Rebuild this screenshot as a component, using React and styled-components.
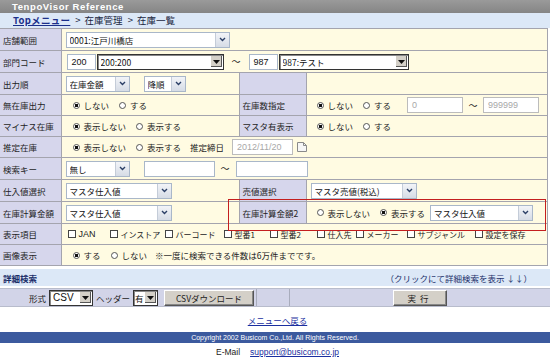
import React from 'react';
import styled, { createGlobalStyle } from 'styled-components';

const GlobalStyle = createGlobalStyle`
  body {
    margin: 0;
    background: #fff;
    font-family: "Noto Sans CJK JP", "Liberation Sans", sans-serif;
    font-size: 8.5px;
    color: #222;
  }
`;

const jp = `"Noto Sans CJK JP", "Liberation Sans", sans-serif`;

const Page = styled.div`
  position: relative;
  width: 550px;
  height: 362px;
  overflow: hidden;
`;

const TitleBar = styled.div`
  height: 13px;
  background: linear-gradient(#9a9a9a, #858585);
  color: #fff;
  font-family: "Liberation Sans", sans-serif;
  font-weight: bold;
  font-size: 9.5px;
  letter-spacing: 0.6px;
  line-height: 13px;
  padding-left: 12px;
`;

const Crumbs = styled.div`
  height: 15px;
  background: #dce8f7;
  line-height: 15px;
  padding-left: 13px;
  font-family: ${jp};
  font-size: 9.5px;
  color: #1a2640;

  a {
    color: #1b2f8a;
    font-weight: bold;
    text-decoration: underline;
    letter-spacing: 0.3px;
  }
`;

const Sep = styled.span`
  margin: 0 4px 0 5px;
`;

const Table = styled.table`
  width: 548px;
  border-collapse: collapse;
  table-layout: fixed;
  font-family: ${jp};
  font-size: 8.5px;
`;

const Row = styled.tr`
  height: ${p => p.$h || 21}px;
`;

const Label = styled.td`
  background: #d6d6ec;
  border: 1px solid #a4a4ae;
  border-left: none;
  padding: 0 0 0 3px;
  white-space: nowrap;
  color: #1e1e1e;
`;

const Value = styled.td`
  background: #fffbe2;
  border: 1px solid #a4a4ae;
  padding: 0 0 0 4px;
  white-space: nowrap;
`;

const Line = styled.div`
  display: flex;
  align-items: center;
  gap: ${p => p.$gap ?? 4}px;
  padding-left: ${p => p.$pl || 0}px;
`;

const Select = styled.div`
  display: flex;
  align-items: center;
  box-sizing: border-box;
  width: ${p => p.$w}px;
  height: 16px;
  background: #fff;
  border: 1px solid ${p => (p.$classic ? '#333' : '#a9b7c9')};
  box-shadow: ${p => (p.$classic ? 'inset 1px 1px 0 #888' : 'none')};
  padding-left: ${p => p.$pl ?? 3}px;
  margin-left: ${p => p.$ml || 0}px;
  font-family: ${p => (p.$latin ? '"Liberation Sans", sans-serif' : jp)};
  font-size: ${p => (p.$latin ? 10 : 8.5)}px;
  color: #111;
  span {
    flex: 1;
    overflow: hidden;
  }
`;

const Arrow = styled.i`
  flex: none;
  width: ${p => (p.$classic ? 11 : 13)}px;
  height: ${p => (p.$classic ? 11 : 14)}px;
  margin-right: ${p => (p.$classic ? 1 : 0)}px;
  display: flex;
  align-items: center;
  justify-content: center;
  background: ${p => (p.$classic ? '#d4d0c8' : 'linear-gradient(#f2f4f8, #d6dce6)')};
  border-left: 1px solid ${p => (p.$classic ? '#fff' : '#c4ccd8')};
  box-shadow: ${p => (p.$classic ? 'inset -1px -1px 0 #555' : 'none')};
`;

const Input = styled.div`
  box-sizing: border-box;
  width: ${p => p.$w}px;
  height: 16px;
  background: #fff;
  border: 1px solid ${p => (p.$disabled ? '#bcbcbc' : '#a9b7c9')};
  color: ${p => (p.$disabled ? '#a8a8a8' : '#111')};
  padding-left: 4px;
  line-height: 14px;
  margin-left: ${p => p.$ml || 0}px;
  font-family: "Liberation Sans", sans-serif;
  font-size: 9px;
`;

const Tilde = styled.span`
  display: inline-block;
  width: ${p => p.$w || 14}px;
  text-align: center;
  font-size: 9px;
`;

const Radio = styled.span`
  display: inline-flex;
  align-items: center;
  margin-left: ${p => p.$ml || 0}px;
  &::before {
    content: '';
    box-sizing: border-box;
    width: 7px;
    height: 7px;
    border-radius: 50%;
    border: 1px solid #555;
    margin-right: 4px;
    background: ${p => (p.$on ? 'radial-gradient(circle, #111 0 1.6px, #fff 1.8px)' : '#fff')};
  }
`;

const Check = styled.span`
  display: inline-flex;
  align-items: center;
  flex: none;
  width: ${p => (p.$w ? `${p.$w}px` : 'auto')};
  font-family: ${p => (p.$latin ? '"Liberation Sans", sans-serif' : jp)};
  font-size: ${p => (p.$latin ? 9 : 8)}px;
  &::before {
    content: '';
    box-sizing: border-box;
    width: 8px;
    height: 8px;
    border: 1px solid #444;
    background: #fff;
    margin-right: 3px;
  }
`;

const Text = styled.span`
  margin-left: ${p => p.$ml || 0}px;
`;

const Highlight = styled.div`
  position: absolute;
  left: 228px;
  top: 199px;
  width: 318px;
  height: 32px;
  box-sizing: border-box;
  border: 1.5px solid #c41e1e;
  pointer-events: none;
`;

const DetailBar = styled.div`
  margin-top: 3px;
  height: 17px;
  background: #dce8f7;
  display: flex;
  align-items: center;
  justify-content: space-between;
  padding: 0 18px 0 3px;
  font-family: ${jp};
  font-size: 8.5px;
  color: #1b2f6a;
  b {
    font-weight: bold;
  }
`;

const Toolbar = styled.div`
  margin-top: 2px;
  height: 17px;
  background: #d2d4e8;
  border-top: 1px solid #b8bccc;
  border-bottom: 1px solid #b8bccc;
  display: grid;
  grid-template-columns: 257px 33px 1fr;
  font-family: ${jp};
  font-size: 8.5px;
`;

const ToolCell = styled.div`
  display: flex;
  align-items: center;
  justify-content: ${p => (p.$center ? 'center' : 'flex-end')};
  gap: 3px;
  padding-right: ${p => (p.$center ? 0 : 2)}px;
  border-right: ${p => (p.$sep ? '1px solid #a8acbc' : 'none')};
`;

const Button = styled.div`
  box-sizing: border-box;
  width: ${p => p.$w}px;
  height: 16px;
  background: #d4d0c8;
  border: 1px solid;
  border-color: #fff #555 #555 #fff;
  box-shadow: inset -1px -1px 0 #888;
  display: flex;
  align-items: center;
  justify-content: center;
  margin-left: ${p => p.$ml || 0}px;
  letter-spacing: ${p => p.$ls || 0}px;
  font-family: ${jp};
  font-size: 8.5px;
  color: #222;
`;

const BackLink = styled.div`
  text-align: center;
  margin-top: 5px;
  height: 16px;
  line-height: 16px;
  padding-left: 5px;
  a {
    color: #1b2fa0;
    text-decoration: underline;
  }
`;

const Copyright = styled.div`
  margin-top: 4px;
  height: 11px;
  background: #3c5a9e;
  color: #fff;
  text-align: center;
  font-family: "Liberation Sans", sans-serif;
  font-size: 7px;
  line-height: 11px;
`;

const Mail = styled.div`
  margin-top: 3px;
  height: 12px;
  line-height: 12px;
  text-align: center;
  font-family: "Liberation Sans", sans-serif;
  font-size: 8.5px;
  padding-left: 5px;
  a {
    margin-left: 10px;
    color: #1b2fa0;
    text-decoration: underline;
  }
`;

const Sel = ({ w, children, classic, ml, latin, pl }) => (
  <Select $w={w} $classic={classic} $ml={ml} $latin={latin} $pl={pl}>
    <span>{children}</span>
    <Arrow $classic={classic}>
      {classic ? (
        <svg width="7" height="4" viewBox="0 0 7 4"><path d="M0 0h7L3.5 4z" fill="#111" /></svg>
      ) : (
        <svg width="7" height="5" viewBox="0 0 7 5"><path d="M1 1l2.5 2.5L6 1" stroke="#2b3f66" strokeWidth="1.4" fill="none" /></svg>
      )}
    </Arrow>
  </Select>
);

const Calendar = () => (
  <svg width="10" height="10" viewBox="0 0 10 10" style={{ marginLeft: 4 }}>
    <path d="M0.5 0.5h6l3 3v6h-9z" fill="#f6f6f6" stroke="#8a8a8a" />
    <path d="M6.5 0.5v3h3" fill="none" stroke="#8a8a8a" />
  </svg>
);

const columns = [
  ['JAN', 42, true],
  ['インストア', 55],
  ['バーコード', 59],
  ['型番1', 46],
  ['型番2', 47],
  ['仕入先', 39],
  ['メーカー', 51],
  ['サブジャンル', 68],
  ['設定を保存', 0],
];

export default function App() {
  return (
    <Page>
      <GlobalStyle />
      <TitleBar>TenpoVisor Reference</TitleBar>
      <Crumbs>
        <a>Topメニュー</a>
        <Sep>&gt;</Sep>在庫管理
        <Sep>&gt;</Sep>在庫一覧
      </Crumbs>
      <Table>
        <colgroup>
          <col style={{ width: 61 }} />
          <col style={{ width: 178 }} />
          <col style={{ width: 67 }} />
          <col />
        </colgroup>
        <tbody>
          <Row $h={22}>
            <Label>店舗範囲</Label>
            <Value colSpan={3}><Sel w={164}>0001:江戸川橋店</Sel></Value>
          </Row>
          <Row $h={22}>
            <Label>部門コード</Label>
            <Value colSpan={3}>
              <Line $gap={0}>
                <Input $w={29} $ml={1}>200</Input>
                <Sel w={127} classic ml={1}>200:200</Sel>
                <Tilde $w={25}>～</Tilde>
                <Input $w={29}>987</Input>
                <Sel w={130} classic ml={1}>987:テスト</Sel>
              </Line>
            </Value>
          </Row>
          <Row $h={22}>
            <Label>出力順</Label>
            <Value>
              <Line $gap={14}>
                <Sel w={64}>在庫金額</Sel>
                <Sel w={42}>降順</Sel>
              </Line>
            </Value>
            <Label />
            <Value />
          </Row>
          <Row>
            <Label>無在庫出力</Label>
            <Value>
              <Radio $on $ml={7}>しない</Radio>
              <Radio $ml={10}>する</Radio>
            </Value>
            <Label>在庫数指定</Label>
            <Value>
              <Line $gap={0}>
                <Radio $on $ml={6}>しない</Radio>
                <Radio $ml={10}>する</Radio>
                <Input $w={56} $ml={16} $disabled>0</Input>
                <Tilde $w={20}>～</Tilde>
                <Input $w={56} $disabled>999999</Input>
              </Line>
            </Value>
          </Row>
          <Row>
            <Label>マイナス在庫</Label>
            <Value>
              <Radio $on $ml={7}>表示しない</Radio>
              <Radio $ml={10}>表示する</Radio>
            </Value>
            <Label>マスタ有表示</Label>
            <Value>
              <Radio $on $ml={6}>しない</Radio>
              <Radio $ml={10}>する</Radio>
            </Value>
          </Row>
          <Row>
            <Label>推定在庫</Label>
            <Value colSpan={3}>
              <Line $gap={0}>
                <Radio $on $ml={7}>表示しない</Radio>
                <Radio $ml={10}>表示する</Radio>
                <Text $ml={9}>推定締日</Text>
                <Input $w={61} $ml={8} $disabled>2012/11/20</Input>
                <Calendar />
              </Line>
            </Value>
          </Row>
          <Row $h={22}>
            <Label>検索キー</Label>
            <Value colSpan={3}>
              <Line $gap={0}>
                <Sel w={64}>無し</Sel>
                <Input $w={71} $ml={14} />
                <Tilde $w={21}>～</Tilde>
                <Input $w={72} />
              </Line>
            </Value>
          </Row>
          <Row $h={22}>
            <Label>仕入値選択</Label>
            <Value><Sel w={106}>マスタ仕入値</Sel></Value>
            <Label>売値選択</Label>
            <Value><Sel w={106}>マスタ売値(税込)</Sel></Value>
          </Row>
          <Row $h={22}>
            <Label>在庫計算金額</Label>
            <Value><Sel w={106}>マスタ仕入値</Sel></Value>
            <Label>在庫計算金額2</Label>
            <Value>
              <Line $gap={0}>
                <Radio $ml={6}>表示しない</Radio>
                <Radio $on $ml={10}>表示する</Radio>
                <Sel w={103} ml={5}>マスタ仕入値</Sel>
              </Line>
            </Value>
          </Row>
          <Row>
            <Label>表示項目</Label>
            <Value colSpan={3}>
              <Line $gap={0} $pl={2}>
                {columns.map(([t, w, latin]) => (
                  <Check key={t} $w={w} $latin={latin}>{t}</Check>
                ))}
              </Line>
            </Value>
          </Row>
          <Row>
            <Label>画像表示</Label>
            <Value colSpan={3}>
              <Radio $on $ml={7}>する</Radio>
              <Radio $ml={10}>しない</Radio>
              <Text $ml={8}>※一度に検索できる件数は6万件までです。</Text>
            </Value>
          </Row>
        </tbody>
      </Table>
      <DetailBar>
        <b>詳細検索</b>
        <span>（クリックにて詳細検索を表示 ↓↓）</span>
      </DetailBar>
      <Toolbar>
        <ToolCell $sep>
          <span>形式</span>
          <Sel w={44} classic latin>CSV</Sel>
          <span>ヘッダー</span>
          <Sel w={25} classic pl={1}>有</Sel>
          <Button $w={90} $ml={3}>CSVダウンロード</Button>
        </ToolCell>
        <ToolCell $sep />
        <ToolCell $center>
          <Button $w={54} $ls={4}>実行</Button>
        </ToolCell>
      </Toolbar>
      <BackLink><a>メニューへ戻る</a></BackLink>
      <Copyright>Copyright 2002 Busicom Co.,Ltd. All Rights Reserved.</Copyright>
      <Mail>E-Mail<a>support@busicom.co.jp</a></Mail>
      <Highlight />
    </Page>
  );
}
